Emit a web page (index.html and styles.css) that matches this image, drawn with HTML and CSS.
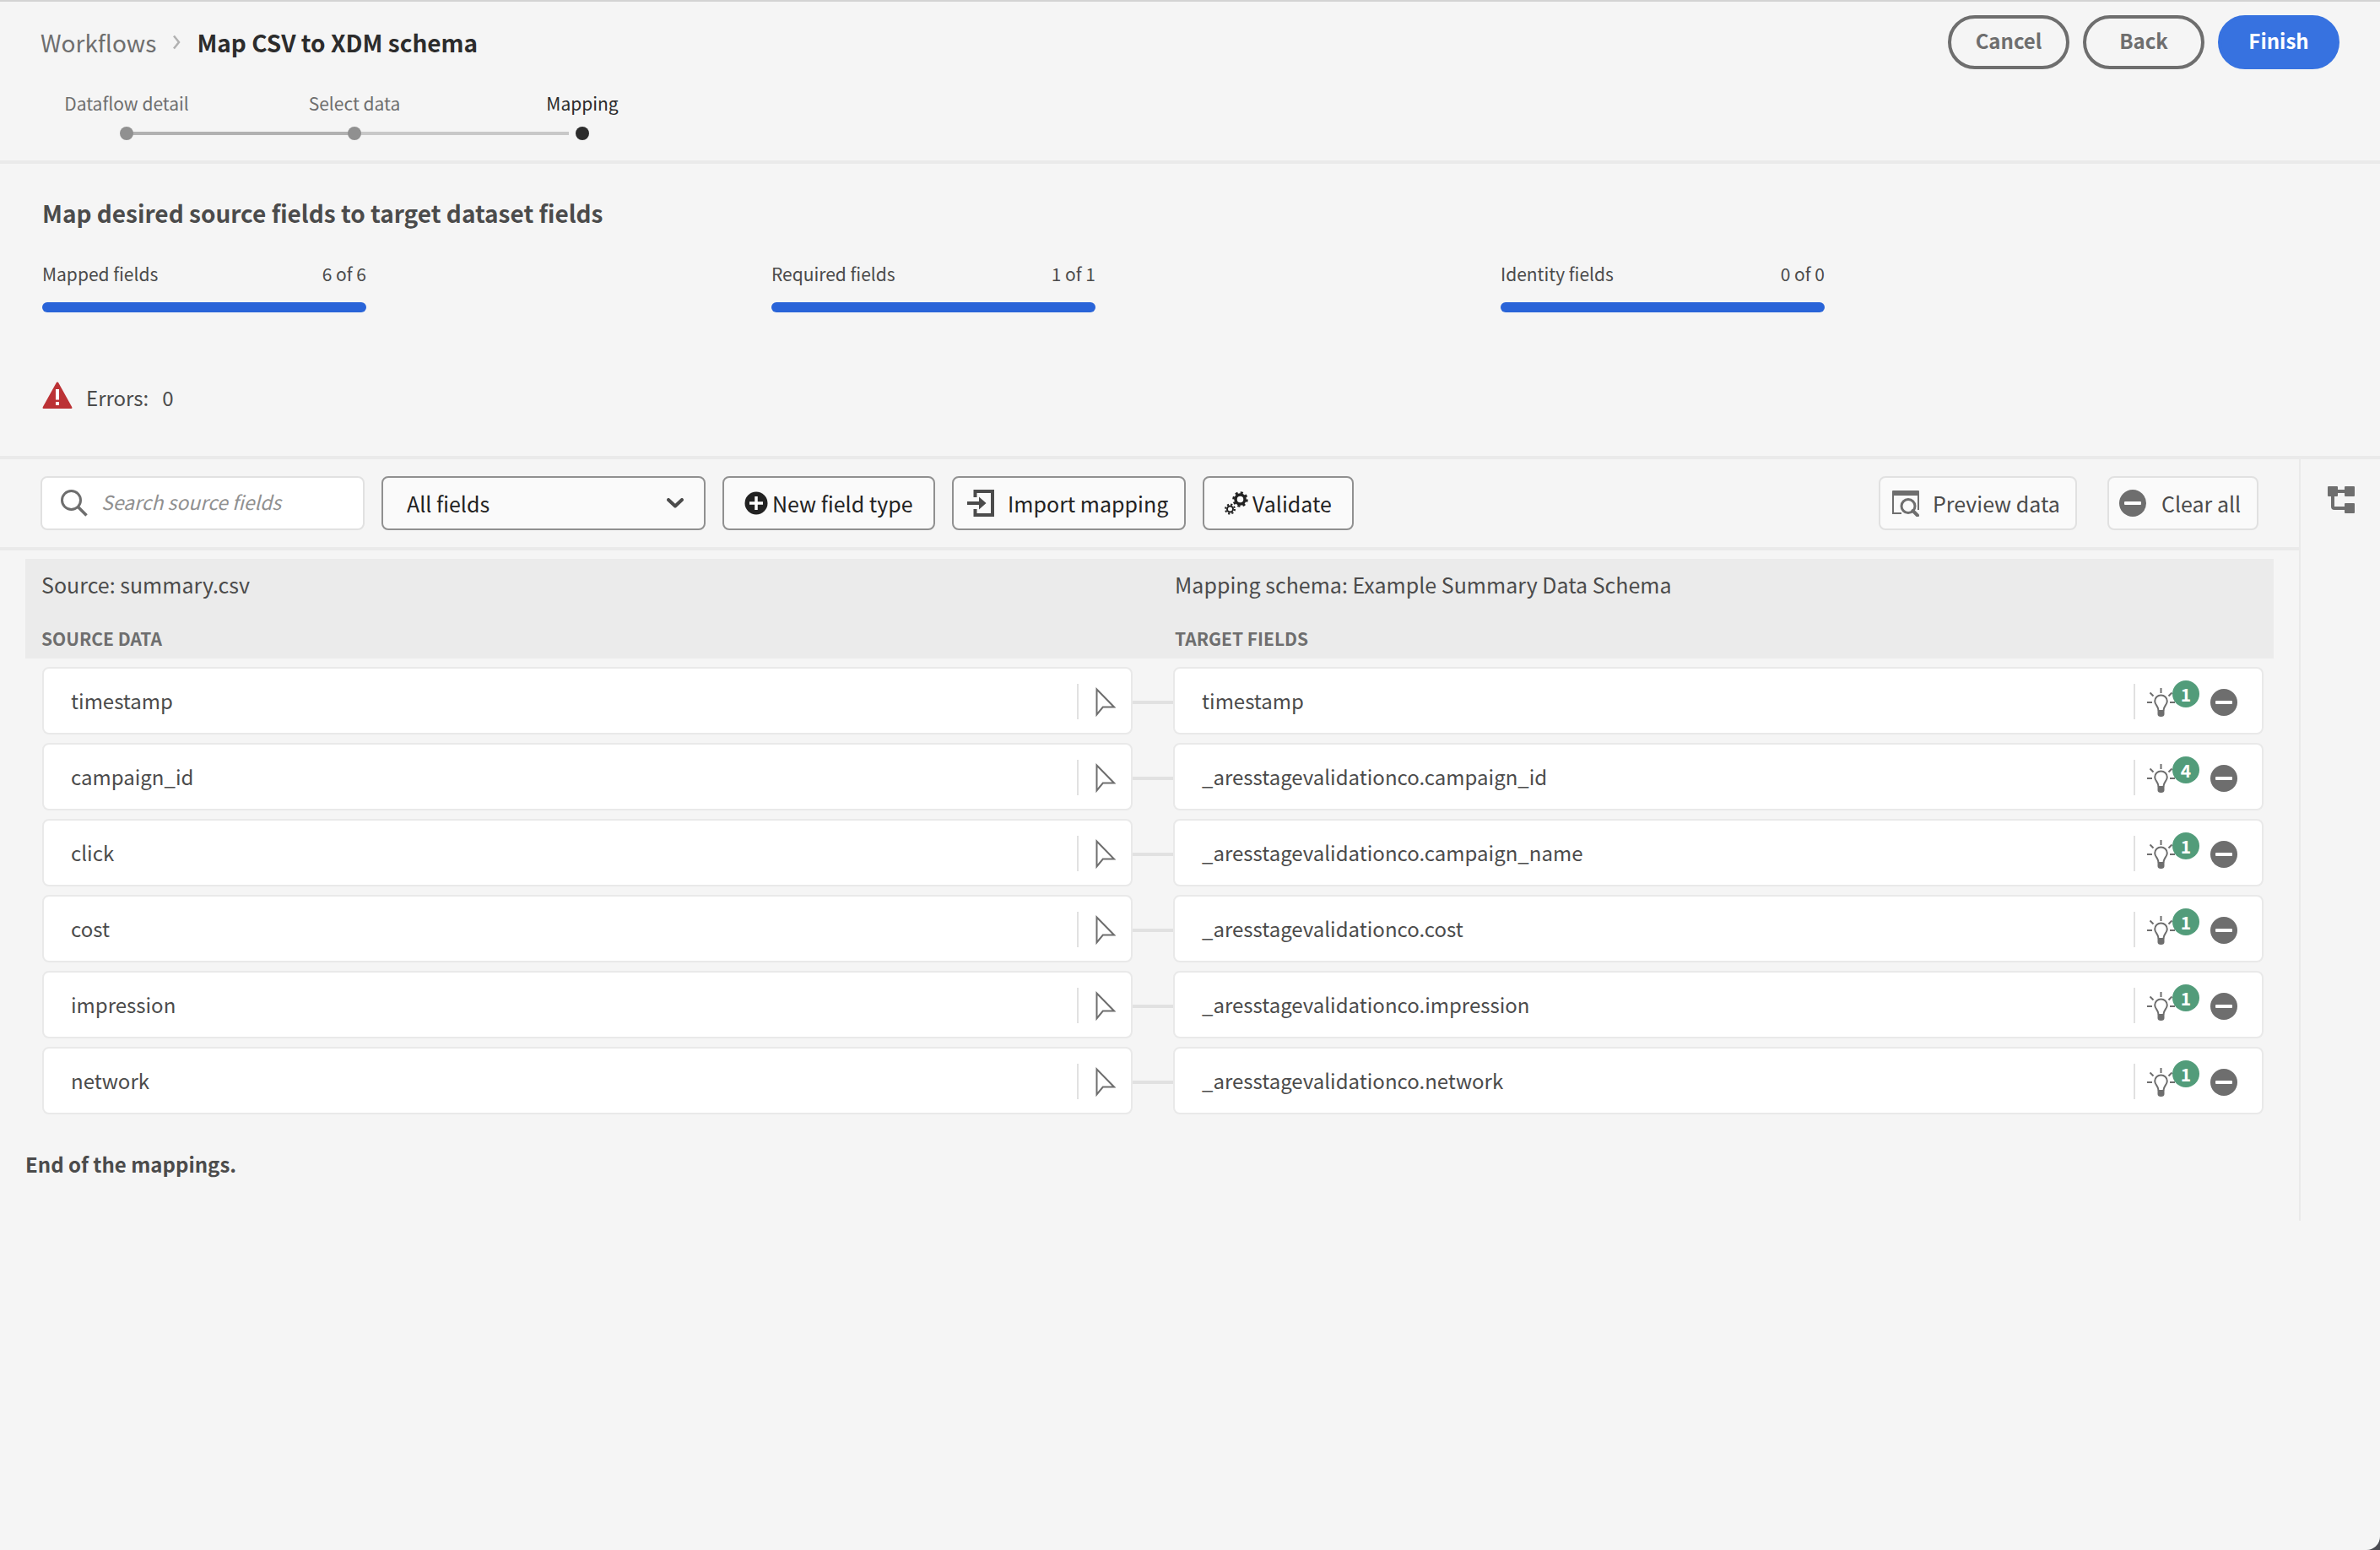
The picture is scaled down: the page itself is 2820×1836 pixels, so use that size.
FILE: index.html
```html
<!DOCTYPE html>
<html lang="en">
<head>
<meta charset="utf-8">
<title>Map CSV to XDM schema</title>
<link rel="stylesheet" href="styles.css">
</head>
<body>
<svg class="sprite" aria-hidden="true">
  <symbol id="i-minus" viewBox="0 0 32 32"><circle cx="16" cy="16" r="16" fill="#6e6e6e"/><rect x="6" y="14" width="20" height="4" rx="1" fill="#fff"/></symbol>
  <symbol id="i-cursor" viewBox="0 0 24 36"><path d="M1.500 2.500V32.500L8.800 23.500H22Z" fill="none" stroke="#6e6e6e" stroke-width="2"/></symbol>
  <symbol id="i-bulb" viewBox="0 0 34 34"><g fill="none" stroke="#6e6e6e" stroke-width="2"><path d="M13.500 26.500C13.500 21.500 9.200 20 9.200 15.500A7.300 7 0 0 1 23.800 15.500C23.800 20 19.500 21.500 19.500 26.500"/><path d="M16.500 0V6M3.500 5.500L7.500 9.500M29.500 5.500L25.500 9.500M0 17H6M27 17H33"/></g><path d="M12.500 26H20.500V31Q20.500 34 16.500 34Q12.500 34 12.500 31Z" fill="#6e6e6e"/></symbol>
</svg>
<div class="page">
  <header class="header">
    <div class="header-main">
      <nav class="crumbs" aria-label="Breadcrumb">
        <a href="#">Workflows</a>
        <svg width="10" height="18" viewBox="0 0 10 18"><path d="M2 1.500L8 9L2 16.500" fill="none" stroke="#b1b1b1" stroke-width="2.500"/></svg>
        <strong>Map CSV to XDM schema</strong>
      </nav>
      <ol class="steps">
        <li class="step done">Dataflow detail</li>
        <li class="step done next">Select data</li>
        <li class="step current">Mapping</li>
      </ol>
    </div>
    <div class="header-actions">
      <button class="pill" type="button">Cancel</button>
      <button class="pill" type="button">Back</button>
      <button class="pill primary" type="button">Finish</button>
    </div>
  </header>

  <section class="summary">
    <h1>Map desired source fields to target dataset fields</h1>
    <div class="meters">
      <div class="meter"><span>Mapped fields</span><span>6 of 6</span><div class="bar"></div></div>
      <div class="meter"><span>Required fields</span><span>1 of 1</span><div class="bar"></div></div>
      <div class="meter"><span>Identity fields</span><span>0 of 0</span><div class="bar"></div></div>
    </div>
    <p class="errors">
      <svg width="36" height="32" viewBox="0 0 36 32"><path d="M18 0.500Q18.800 0.500 19.200 1.300L35.300 30.300Q36 32 34.500 32H1.500Q0 32 0.700 30.300L16.800 1.300Q17.200 0.500 18 0.500Z" fill="#bb3235"/><path d="M16 9H20V21.500H16ZM16 24H20V28H16Z" fill="#fff"/></svg>
      <span>Errors:</span><span>0</span>
    </p>
  </section>

  <div class="workspace">
    <main class="main">
      <div class="toolbar">
        <label class="search">
          <svg width="32" height="32" viewBox="0 0 32 32"><circle cx="12.500" cy="12.500" r="11" fill="none" stroke="#6e6e6e" stroke-width="3"/><path d="M20.500 20.500L30.500 30.500" stroke="#6e6e6e" stroke-width="3.500"/></svg>
          <input type="search" placeholder="Search source fields" aria-label="Search source fields">
        </label>
        <div class="select">
          <select aria-label="Field filter"><option>All fields</option></select>
          <svg width="20" height="12" viewBox="0 0 20 12"><path d="M2 2L10 9.500L18 2" fill="none" stroke="#4b4b4b" stroke-width="4" stroke-linecap="round" stroke-linejoin="round"/></svg>
        </div>
        <button class="btn new" type="button">
          <svg width="28" height="28" viewBox="0 0 28 28"><circle cx="14" cy="14" r="13.500" fill="#222"/><path d="M14 6V22M6 14H22" stroke="#fff" stroke-width="3.500"/></svg>
          New field type
        </button>
        <button class="btn import" type="button">
          <svg width="32" height="32" viewBox="0 0 32 32"><path d="M9.500 9V2H30V30H9.500V23" fill="none" stroke="#4b4b4b" stroke-width="4"/><path d="M0 14H14V8.500L22.500 16L14 23.500V18H0Z" fill="#4b4b4b"/></svg>
          Import mapping
        </button>
        <button class="btn validate" type="button">
          <svg width="28" height="28" viewBox="0 0 28 28"><g fill="none" stroke="#222"><circle cx="18.500" cy="9.500" r="5.500" stroke-width="3.500"/><circle cx="18.500" cy="9.500" r="8" stroke-width="2.500" stroke-dasharray="3.140 3.140"/><circle cx="6.500" cy="21" r="3.500" stroke-width="2"/><circle cx="6.500" cy="21" r="5.500" stroke-width="2" stroke-dasharray="2.160 2.160"/></g></svg>
          Validate
        </button>
        <button class="btn quiet preview" type="button">
          <svg width="32" height="32" viewBox="0 0 32 32"><path d="M0 2Q0 1 1 1H31Q32 1 32 2V7H0Z" fill="#6e6e6e"/><path d="M1 6V28H11M31 6V24" fill="none" stroke="#6e6e6e" stroke-width="2"/><circle cx="19" cy="19.500" r="8" fill="none" stroke="#6e6e6e" stroke-width="3"/><path d="M24.500 25L30 30.500" stroke="#6e6e6e" stroke-width="4" stroke-linecap="round"/></svg>
          Preview data
        </button>
        <button class="btn quiet clear" type="button">
          <svg width="32" height="32"><use href="#i-minus"/></svg>
          Clear all
        </button>
      </div>

      <div class="map-head">
        <div><p class="map-name">Source: summary.csv</p><h2>SOURCE DATA</h2></div>
        <div><p class="map-name">Mapping schema: Example Summary Data Schema</p><h2>TARGET FIELDS</h2></div>
      </div>
      <ul class="rows" id="rows"></ul>
      <p class="end">End of the mappings.</p>
    </main>
    <aside class="rail">
      <button class="icon-btn" type="button" aria-label="Schema tree">
        <svg width="32" height="32" viewBox="0 0 32 32"><g fill="#6e6e6e"><rect width="12" height="12" rx="1"/><rect x="20" width="12" height="12" rx="1"/><rect x="20" y="20" width="12" height="12" rx="1"/></g><path d="M12 6H20M6 12V24Q6 26 8 26H20" fill="none" stroke="#6e6e6e" stroke-width="4"/></svg>
      </button>
    </aside>
  </div>
</div>
<script src="rows.js"></script>
</body>
</html>
```
FILE: styles.css
```css
* { box-sizing: border-box; }
html { background: #4b4b52; }
body { margin: 0; font: 24px/36px "Noto Sans CJK SC", "Noto Sans", sans-serif; color: #4b4b4b; }
p, h1, h2, ol, ul { margin: 0; padding: 0; list-style: none; }
svg { display: block; flex: none; }
button, input, select { font: inherit; color: inherit; }
button { cursor: pointer; }
.sprite { position: absolute; width: 0; height: 0; }
.page { min-height: 100vh; background: #f5f5f5; border-top: 2px solid #d3d3d3; border-bottom-right-radius: 16px; }

.header { display: flex; justify-content: space-between; align-items: flex-start; height: 192px; padding: 16px 48px 0; border-bottom: 4px solid #eaeaea; }
.crumbs { display: flex; align-items: center; gap: 19px; height: 64px; font-size: 28px; }
.crumbs a { color: #6e6e6e; text-decoration: none; }
.crumbs strong { color: #2c2c2c; font-weight: 700; }
.steps { display: flex; margin: 24px 0 0 -33px; font-size: 21px; line-height: 32px; color: #6e6e6e; }
.step { position: relative; width: 270px; height: 60px; text-align: center; }
.step::after { content: ""; position: absolute; left: 127px; top: 44px; width: 16px; height: 16px; border-radius: 8px; background: #909090; }
.step.current::after { background: #2c2c2c; }
.step.done::before { content: ""; position: absolute; left: 135px; top: 50px; width: 270px; height: 4px; background: #b1b1b1; }
.step.next::before { width: 254px; background: #c8c8c8; }
.current { color: #2c2c2c; }
.header-actions { display: flex; gap: 16px; }
.pill { width: 144px; height: 64px; padding: 0 0 4px; border: 4px solid #6e6e6e; border-radius: 32px; background: none; color: #6e6e6e; font-weight: 700; }
.primary { border-color: #3772e0; background: #3772e0; color: #fff; }

.summary { height: 350px; padding: 38px 50px 0; border-bottom: 4px solid #eaeaea; }
h1 { font-size: 28px; line-height: 40px; font-weight: 700; }
.meters { display: grid; grid-template-columns: repeat(3, 1fr); margin-top: 36px; padding-right: 128px; font-size: 21px; line-height: 32px; }
.meter { display: grid; grid-template-columns: 1fr auto; row-gap: 18px; width: 384px; }
.bar { grid-column: 1 / 3; height: 12px; border-radius: 6px; background: #2964d8; }
.errors { display: flex; align-items: center; gap: 16px; margin-top: 82px; }
.errors svg { margin-bottom: 6px; }

.workspace { display: flex; min-height: 902px; }
.main { flex: 1; min-width: 0; }
.toolbar { display: flex; gap: 20px; height: 108px; padding: 20px 48px; border-bottom: 4px solid #eaeaea; font-size: 25px; }
.search, .select { display: flex; align-items: center; width: 384px; height: 64px; border: 2px solid #e1e1e1; border-radius: 8px; background: #fff; }
.search { gap: 16px; padding: 0 22px; font-size: 23px; }
.search input { flex: 1; min-width: 0; padding: 0 0 4px; border: 0; outline: 0; background: none; }
.search input::placeholder { color: #909090; font-style: italic; opacity: 1; }
.select { position: relative; border-color: #909090; background: #fafafa; color: #222; }
.select select { width: 100%; height: 60px; padding: 0 28px; border: 0; background: none; appearance: none; }
.select svg { position: absolute; right: 24px; pointer-events: none; }
.btn { display: flex; align-items: center; gap: 16px; height: 64px; padding: 0 16px; border: 2px solid #909090; border-radius: 8px; background: #fafafa; color: #222; white-space: nowrap; }
.new { width: 252px; padding: 0 24px; gap: 5px; }
.import { width: 277px; }
.validate { width: 179px; padding: 0 24px; gap: 5px; }
.quiet { border-color: #e1e1e1; color: #4b4b4b; }
.preview { width: 235px; margin-left: auto; padding: 0 14px; }
.clear { width: 179px; margin-left: 16px; padding: 0 12px; gap: 18px; }

.map-head { display: grid; grid-template-columns: 1fr 1fr; column-gap: 50px; height: 118px; margin: 10px 30px 0; padding: 12px 9px 0 19px; background: #ebebeb; }
.map-name { font-size: 25px; }
h2 { margin-top: 30px; font-size: 21px; line-height: 32px; font-weight: 700; color: #6e6e6e; }
.rows { display: grid; row-gap: 10px; margin: 10px 42px 0 50px; }
.row { display: grid; grid-template-columns: 1fr 48px 1fr; align-items: center; }
.card { display: flex; align-items: center; height: 80px; padding: 0 18px 0 32px; border: 2px solid #e9e9e9; border-radius: 8px; background: #fff; }
.field { flex: 1; }
.link { height: 4px; margin-top: 4px; background: #e1e1e1; }
.tools { display: flex; align-items: center; height: 42px; margin-top: 2px; padding: 2px 0 0 20px; border-left: 2px solid #e1e1e1; }
.target { padding-right: 29px; }
.target .tools { gap: 41px; padding-left: 14px; }
.icon-btn { position: relative; padding: 0; border: 0; background: none; }
.badge { position: absolute; left: 30px; top: -9px; width: 32px; height: 32px; border-radius: 16px; background: #529c7a; color: #fff; font-size: 21px; line-height: 32px; font-weight: 700; text-align: center; }
.end { margin: 41px 30px 0; font-weight: 700; }
.rail { width: 96px; padding: 32px; border-left: 2px solid #eaeaea; }
```
FILE: rows.js
```js
const rows = [
  ["timestamp", "timestamp", 1],
  ["campaign_id", "_aresstagevalidationco.campaign_id", 4],
  ["click", "_aresstagevalidationco.campaign_name", 1],
  ["cost", "_aresstagevalidationco.cost", 1],
  ["impression", "_aresstagevalidationco.impression", 1],
  ["network", "_aresstagevalidationco.network", 1]
];
document.getElementById("rows").innerHTML = rows.map(([source, target, count]) => `
  <li class="row">
    <div class="card">
      <span class="field">${source}</span>
      <div class="tools"><button class="icon-btn" type="button" aria-label="Select source"><svg width="24" height="36"><use href="#i-cursor"/></svg></button></div>
    </div>
    <div class="link"></div>
    <div class="card target">
      <span class="field">${target}</span>
      <div class="tools">
        <button class="icon-btn" type="button" aria-label="Recommendations"><svg width="34" height="34"><use href="#i-bulb"/></svg><span class="badge">${count}</span></button>
        <button class="icon-btn" type="button" aria-label="Remove mapping"><svg width="32" height="32"><use href="#i-minus"/></svg></button>
      </div>
    </div>
  </li>`).join("");
```
